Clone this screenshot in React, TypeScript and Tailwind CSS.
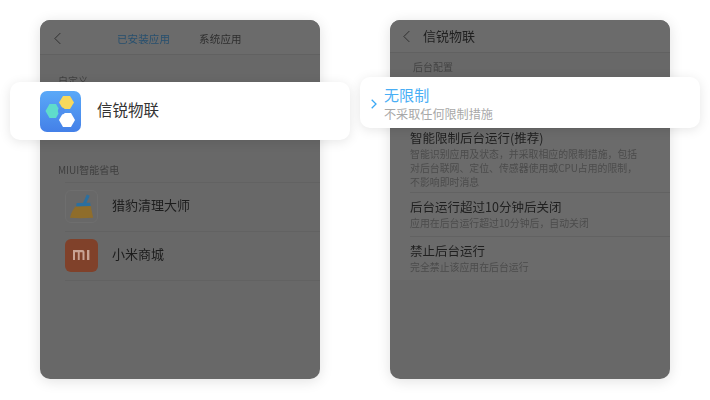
const font = "[font-family:'Noto_Sans_CJK_SC','Liberation_Sans',sans-serif]";

const policies = [
  {
    title: '智能限制后台运行(推荐)',
    desc: [
      '智能识别应用及状态，并采取相应的限制措施，包括',
      '对后台联网、定位、传感器使用或CPU占用的限制，',
      '不影响即时消息',
    ],
  },
  {
    title: '后台运行超过10分钟后关闭',
    desc: ['应用在后台运行超过10分钟后，自动关闭'],
  },
  {
    title: '禁止后台运行',
    desc: ['完全禁止该应用在后台运行'],
  },
];

function BackArrow({ className }: { className: string }) {
  return (
    <svg className={className} viewBox="0 0 8 14" fill="none" stroke="currentColor" strokeWidth="1.1">
      <path d="M7.2 0.8 1 7l6.2 6.2" />
    </svg>
  );
}

function AppLogo() {
  return (
    <svg className="w-[41px] h-[41px]" viewBox="0 0 41 41">
      <defs>
        <linearGradient id="logoBg" x1="0" y1="0" x2="0" y2="1">
          <stop offset="0" stopColor="#5aa9f8" />
          <stop offset="1" stopColor="#4480e8" />
        </linearGradient>
      </defs>
      <rect width="41" height="41" rx="7" fill="url(#logoBg)" />
      <polygon points="5.5,20 9.5,13 16,13 20,20 16,27 9.5,27" fill="#5fdccb" />
      <polygon points="19,11.5 23,5 30,5 34,11.5 30,18 23,18" fill="#f8d95c" />
      <polygon points="19,29 23,22 31,22 35,29 31,36 23,36" fill="#ffffff" />
      <circle cx="21.5" cy="20" r="3.6" fill="#4f8fee" />
    </svg>
  );
}

function BroomIcon() {
  return (
    <div className="w-[33px] h-[33px] rounded-md border border-[#6e6e6e]">
      <svg className="w-full h-full" viewBox="0 0 32 32">
        <path d="M21.5 3.5 24.5 5 20.5 13.5 17.5 12.5Z" fill="#2b6f9f" />
        <path d="M10.5 15.5Q6.5 19 4 27.5 14 28.5 28 27.5L25.5 15.5Z" fill="#8f6d2b" />
        <path d="M11 12.5 25 12 25.5 15.5 10.5 16Z" fill="#2b6f9f" />
      </svg>
    </div>
  );
}

function MiIcon() {
  return (
    <div className="w-[33px] h-[33px] rounded-md bg-[#80412a] flex items-center justify-center">
      <svg className="w-[18px] h-[10px]" viewBox="0 1 18 10" fill="#c9a394">
        <path d="M0 1h9.5q2 0 2 2v8H9.5V3.2H6.7V11H4.8V3.2H2V11H0Z" />
        <rect x="14" y="1" width="2.4" height="10" />
      </svg>
    </div>
  );
}

function AppRow({ icon, name }: { icon: React.ReactNode; name: string }) {
  return (
    <div className="h-[49px] ml-[25px] pr-3 flex items-center border-t border-[#626262]">
      <div className="w-[47px] flex mb-[2px]">{icon}</div>
      <span className="mb-[6px] text-[13px] leading-none text-[#1c1c1c]">{name}</span>
    </div>
  );
}

function Policy({ title, desc, first }: { title: string; desc: string[]; first: boolean }) {
  return (
    <div className={first ? 'ml-[20px] pb-[3px]' : 'ml-[20px] pt-[5px] pb-[6px] border-t border-[#626262]'}>
      <div className="text-[12.5px] leading-[18px] text-[#1f1f1f]">{title}</div>
      {desc.map((line) => (
        <div key={line} className="text-[9.9px] leading-[14px] text-[#4c4c4c] whitespace-nowrap">
          {line}
        </div>
      ))}
    </div>
  );
}

export default function App() {
  return (
    <div className={`w-[710px] h-[400px] bg-white overflow-hidden flex pt-5 pl-10 gap-[70px] ${font}`}>
      {/* left phone */}
      <div className="relative w-[280px] h-[359px] rounded-[10px] bg-[#686868] shadow-[0_2px_14px_rgba(0,0,0,0.12)]">
        <div className="overflow-hidden rounded-[10px] h-full blur-[0.3px]">
          <div className="h-[35px] pt-[3px] bg-[#6b6b6b] border-b border-[#616161] flex items-center text-[10.5px] text-[#2e2e2e] pl-[14px]">
            <BackArrow className="w-[7px] h-[13px] text-[#2e2e2e]" />
            <span className="ml-[56px] text-[#27506f] tracking-[0.1px]">已安装应用</span>
            <span className="ml-[29px] tracking-[0.2px]">系统应用</span>
          </div>
          <div className="pl-[18px] pt-[21px] text-[10px] leading-none text-[#3f3f3f]">自定义</div>
          <div className="mt-[77px] pl-[18px] pb-[5px] text-[10px] leading-[14px] text-[#3f3f3f]">MIUI智能省电</div>
          <AppRow icon={<BroomIcon />} name="猎豹清理大师" />
          <AppRow icon={<MiIcon />} name="小米商城" />
          <div className="ml-[25px] border-t border-[#626262]" />
        </div>
        <div className="absolute left-[-30px] top-[62px] w-[340px] h-[58px] rounded-[10px] bg-white shadow-[0_2px_12px_rgba(0,0,0,0.1)] flex items-center pl-[30px]">
          <AppLogo />
          <span className="ml-[16px] mb-[3px] text-[15.5px] leading-none text-[#333333]">信锐物联</span>
        </div>
      </div>

      {/* right phone */}
      <div className="relative w-[280px] h-[359px] rounded-[10px] bg-[#686868] shadow-[0_2px_14px_rgba(0,0,0,0.12)]">
        <div className="overflow-hidden rounded-[10px] h-full blur-[0.3px]">
          <div className="h-[33px] bg-[#6b6b6b] border-b border-[#616161] flex items-center pl-[13px]">
            <BackArrow className="w-[7px] h-[13px] text-[#2e2e2e]" />
            <span className="ml-[13px] text-[13px] text-[#1f1f1f]">信锐物联</span>
          </div>
          <div className="pl-[23px] pt-[7px] text-[10px] leading-[14px] text-[#444444]">后台配置</div>
          <div className="mt-[55px] bg-[#6b6b6b]">
            {policies.map((p, i) => (
              <Policy key={p.title} title={p.title} desc={p.desc} first={i === 0} />
            ))}
          </div>
        </div>
        <div className="absolute left-[-30px] top-[57px] w-[340px] h-[51px] rounded-[10px] bg-white shadow-[0_2px_12px_rgba(0,0,0,0.1)] flex items-center">
          <svg className="ml-[11px] w-[6px] h-[10px] mt-[2px] text-[#3aa8f5]" viewBox="0 0 6 10" fill="none" stroke="currentColor" strokeWidth="1.3">
            <path d="M0.7 0.7 5 5 0.7 9.3" />
          </svg>
          <div className="ml-[7px] pt-[1px]">
            <div className="text-[15px] leading-[20px] text-[#49aef5] tracking-[0.1px]">无限制</div>
            <div className="text-[12.1px] leading-[17px] text-[#a8a8a8]">不采取任何限制措施</div>
          </div>
        </div>
      </div>
    </div>
  );
}
